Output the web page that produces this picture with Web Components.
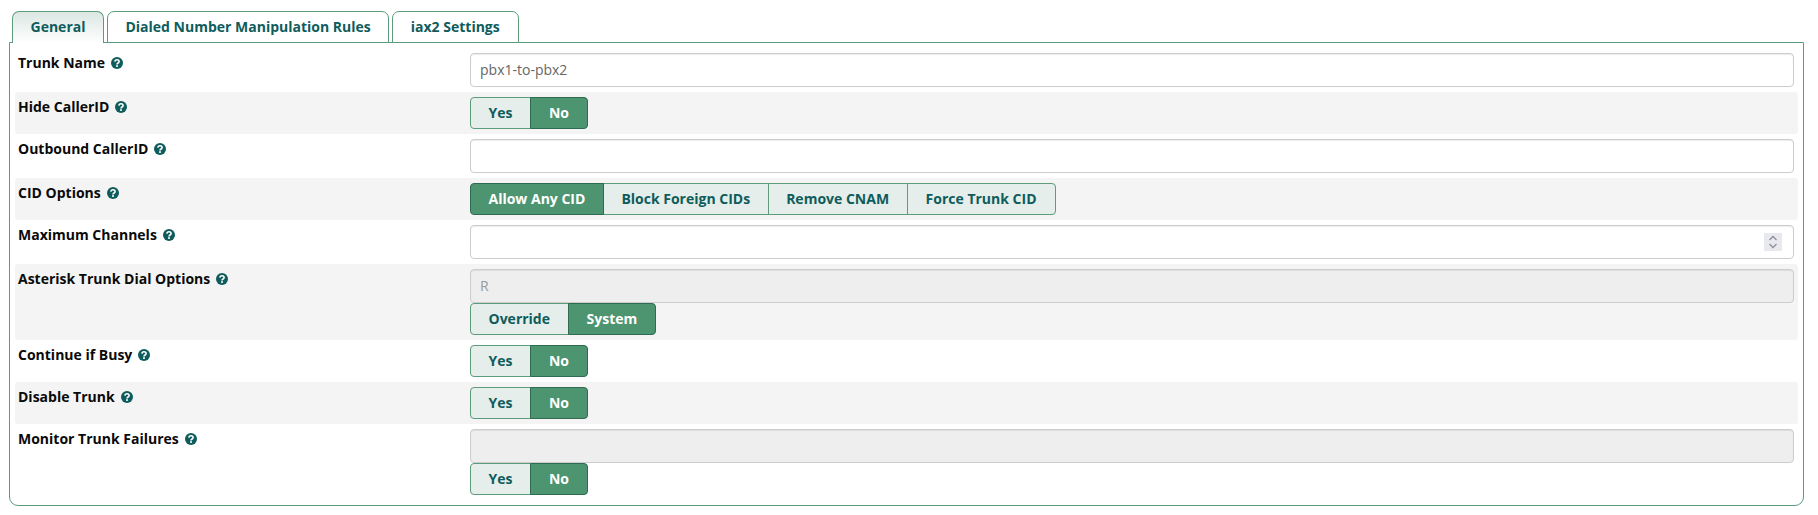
<!DOCTYPE html>
<html>
<head>
<meta charset="utf-8">
<title>Trunk</title>
<style>
	html, body { margin: 0; padding: 0; background: #fff; }
	body { font-family: "Open Sans", "Liberation Sans", sans-serif; font-size: 14px; }
</style>
</head>
<body>
<trunk-page>
	<trunk-tabs slot="tabs">
		<trunk-tab active>General</trunk-tab>
		<trunk-tab>Dialed Number Manipulation Rules</trunk-tab>
		<trunk-tab>iax2 Settings</trunk-tab>
	</trunk-tabs>

	<form-row label="Trunk Name"><text-box value="pbx1-to-pbx2"></text-box></form-row>
	<form-row label="Hide CallerID" alt><seg-group options="Yes,No" selected="No"></seg-group></form-row>
	<form-row label="Outbound CallerID"><text-box></text-box></form-row>
	<form-row label="CID Options" alt><seg-group options="Allow Any CID,Block Foreign CIDs,Remove CNAM,Force Trunk CID" selected="Allow Any CID"></seg-group></form-row>
	<form-row label="Maximum Channels"><text-box type="number"></text-box></form-row>
	<form-row label="Asterisk Trunk Dial Options" alt>
		<text-box value="R" disabled></text-box>
		<seg-group options="Override,System" selected="System"></seg-group>
	</form-row>
	<form-row label="Continue if Busy"><seg-group options="Yes,No" selected="No"></seg-group></form-row>
	<form-row label="Disable Trunk" alt><seg-group options="Yes,No" selected="No"></seg-group></form-row>
	<form-row label="Monitor Trunk Failures">
		<text-box disabled></text-box>
		<seg-group options="Yes,No" selected="No"></seg-group>
	</form-row>
</trunk-page>

<script>
//page frame: tabs on top, then the bordered panel with the rows
class TrunkPage extends HTMLElement {
	constructor() {
		super();
		let shadow = this.attachShadow({mode : 'open'});
		shadow.innerHTML = `
			<style>
				:host {
					display: block;
					padding: 11px 14px 0 9px;
				}
				#panel {
					border: 1px solid #5c9c7c;
					border-radius: 0 0 9px 9px;
					padding: 5px;
					margin-top: -1px;
				}
			</style>
			<slot name="tabs"></slot>
			<div id="panel"><slot></slot></div>
		`;
	}
}

class TrunkTabs extends HTMLElement {
	constructor() {
		super();
		let shadow = this.attachShadow({mode : 'open'});
		shadow.innerHTML = `
			<style>
				:host {
					display: flex;
					gap: 3px;
					padding-left: 3px;
					position: relative;
					z-index: 1;
				}
			</style>
			<slot></slot>
		`;
	}
}

class TrunkTab extends HTMLElement {
	constructor() {
		super();
		let shadow = this.attachShadow({mode : 'open'});
		shadow.innerHTML = `
			<style>
				:host {
					display: block;
					box-sizing: border-box;
					height: 32px;
					line-height: 29px;
					padding: 0 17.5px;
					border: 1px solid #5c9c7c;
					border-radius: 7px 7px 0 0;
					background: #fff;
					color: #0f5c5c;
					font-weight: 700;
					font-size: 14px;
					white-space: nowrap;
				}
				:host(:last-child) {
					padding-right: 18.5px;
				}
				:host([active]) {
					border-bottom-color: transparent;
					background: linear-gradient(#dae6e1, #fff) border-box;
				}
			</style>
			<slot></slot>
		`;
	}
}

//one line of the form: label with help icon on the left, controls on the right
class FormRow extends HTMLElement {
	constructor() {
		super();
		let shadow = this.attachShadow({mode : 'open'});
		shadow.innerHTML = `
			<style>
				:host {
					display: grid;
					grid-template-columns: 455px 1fr;
					padding: 5px 4px 5px 0;
					border-radius: 3px;
				}
				:host([alt]) {
					background: #f4f4f4;
				}
				#label {
					display: flex;
					align-items: center;
					gap: 6px;
					height: 18px;
					padding-left: 3px;
					color: #0a0a0a;
					font-weight: 700;
					font-size: 14px;
				}
				svg { width: 12px; height: 12px; flex: none; margin-top: 1px; }
				#controls { display: flex; flex-direction: column; }
			</style>
			<div id="label">
				<span id="text"></span>
				<svg viewBox="0 0 12 12">
					<circle cx="6" cy="6" r="6" fill="#0f5c5c"/>
					<path d="M3.9 4.6C4 3.3 4.9 2.7 6 2.7c1.200 0 2.100 .7 2.100 1.800 0 1.500-2.100 1.500-2.100 2.900" fill="none" stroke="#fff" stroke-width="1.600"/>
					<rect x="5.100" y="8.200" width="1.800" height="1.700" fill="#fff"/>
				</svg>
			</div>
			<div id="controls"><slot></slot></div>
		`;
		shadow.getElementById('text').textContent = this.getAttribute('label');
	}
}

class TextBox extends HTMLElement {
	constructor() {
		super();
		let shadow = this.attachShadow({mode : 'open'});
		shadow.innerHTML = `
			<style>
				:host { display: block; position: relative; }
				input {
					display: block;
					box-sizing: border-box;
					width: 100%;
					height: 34px;
					padding: 0 9px 2px;
					border: 1px solid #ccc;
					border-radius: 4px;
					background: #fff;
					box-shadow: inset 0 1px 1px rgba(0, 0, 0, 0.075);
					color: #666;
					font-family: "Open Sans", "Liberation Sans", sans-serif;
					font-size: 14px;
					outline: none;
				}
				input:disabled {
					background: #eee;
					color: #999;
				}
				input::-webkit-inner-spin-button {
					-webkit-appearance: none;
				}
				/* the number arrows sit over the input */
				svg {
					position: absolute;
					top: 8px;
					right: 12px;
					width: 18px;
					height: 18px;
				}
			</style>
			<input>
		`;
		let inp = shadow.querySelector('input');
		inp.type = this.getAttribute('type') || 'text';
		inp.value = this.getAttribute('value') || '';
		inp.disabled = this.hasAttribute('disabled');
		if (inp.type == 'number') {
			let arrows = document.createElementNS('http://www.w3.org/2000/svg', 'svg');
			arrows.setAttribute('viewBox', '0 0 18 18');
			arrows.innerHTML = `
				<rect width="18" height="18" fill="#e8e8ef"/>
				<path d="M5.500 7 9 3.500 12.500 7M5.500 11 9 14.500 12.500 11" fill="none" stroke="#8f8f9d" stroke-width="1.300"/>
			`;
			shadow.appendChild(arrows);
		}
	}
}

//radio style button set, the selected one goes dark
class SegGroup extends HTMLElement {
	constructor() {
		super();
		let shadow = this.attachShadow({mode : 'open'});
		shadow.innerHTML = `
			<style>
				:host { display: flex; }
				button {
					box-sizing: border-box;
					height: 32px;
					padding: 0 17.500px 2px;
					margin: 0 0 0 -1px;
					border: 1px solid #5c9c7c;
					background: #e5eeea;
					color: #0f5c5c;
					font-family: "Open Sans", "Liberation Sans", sans-serif;
					font-size: 14px;
					font-weight: 700;
					white-space: nowrap;
				}
				button:first-of-type { margin-left: 0; border-radius: 4px 0 0 4px; }
				button:last-of-type { border-radius: 0 4px 4px 0; min-width: 58px; padding-left: 18px; padding-right: 18px; }
				button.on {
					position: relative;
					background: #4d9470;
					border-color: #2f6b50;
					color: #fff;
				}
			</style>
		`;
		let sel = this.getAttribute('selected');
		this.getAttribute('options').split(',').forEach(function(name) {
			let btn = document.createElement('button');
			btn.type = 'button';
			btn.textContent = name;
			if (name == sel) btn.className = 'on';
			shadow.appendChild(btn);
		});
	}
}

window.customElements.define('trunk-page', TrunkPage);
window.customElements.define('trunk-tabs', TrunkTabs);
window.customElements.define('trunk-tab', TrunkTab);
window.customElements.define('form-row', FormRow);
window.customElements.define('text-box', TextBox);
window.customElements.define('seg-group', SegGroup);
</script>
</body>
</html>
